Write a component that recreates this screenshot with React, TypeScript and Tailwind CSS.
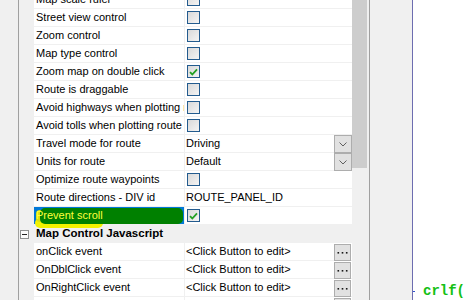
import React from "react";

type Row =
  | { kind: "check"; label: string; checked?: boolean; selected?: boolean }
  | { kind: "drop"; label: string; value: string }
  | { kind: "text"; label: string; value: string }
  | { kind: "btn"; label: string; value: string }
  | { kind: "cat"; label: string };

const rows: Row[] = [
  { kind: "check", label: "Map scale ruler" },
  { kind: "check", label: "Street view control" },
  { kind: "check", label: "Zoom control" },
  { kind: "check", label: "Map type control" },
  { kind: "check", label: "Zoom map on double click", checked: true },
  { kind: "check", label: "Route is draggable" },
  { kind: "check", label: "Avoid highways when plotting route" },
  { kind: "check", label: "Avoid tolls when plotting route" },
  { kind: "drop", label: "Travel mode for route", value: "Driving" },
  { kind: "drop", label: "Units for route", value: "Default" },
  { kind: "check", label: "Optimize route waypoints" },
  { kind: "text", label: "Route directions - DIV id", value: "ROUTE_PANEL_ID" },
  { kind: "check", label: "Prevent scroll", checked: true, selected: true },
  { kind: "cat", label: "Map Control Javascript" },
  { kind: "btn", label: "onClick event", value: "<Click Button to edit>" },
  { kind: "btn", label: "OnDblClick event", value: "<Click Button to edit>" },
  { kind: "btn", label: "OnRightClick event", value: "<Click Button to edit>" },
  { kind: "btn", label: "OnMouseMove event", value: "<Click Button to edit>" },
];

function CheckBox({ checked }: { checked?: boolean }) {
  return (
    <div className="ml-[1px] mt-[2px] flex h-[13px] w-[13px] items-center justify-center border border-[#235b8e] bg-gradient-to-br from-[#d9d9d9] to-[#f4f4f4]">
      {checked && (
        <svg width="9" height="8" viewBox="0 0 9 8">
          <path d="M1 4.2 L3.3 6.5 L8 1.3" fill="none" stroke="#23a023" strokeWidth="1.8" />
        </svg>
      )}
    </div>
  );
}

function DropBtn() {
  return (
    <div className="relative z-10 ml-auto flex h-[18px] w-[18px] shrink-0 items-center justify-center self-start border border-[#adadad] bg-[#e1e1e1]">
      <svg width="8" height="5" viewBox="0 0 8 5">
        <path d="M0.5 0.5 L4 4 L7.5 0.5" fill="none" stroke="#5f5f5f" strokeWidth="1" />
      </svg>
    </div>
  );
}

function DotsBtn() {
  return (
    <div className="relative z-10 ml-auto mr-[1px] mt-[1px] flex h-[17px] w-[17px] shrink-0 items-center justify-center self-start border border-[#adadad] bg-[#e1e1e1]">
      <svg width="11" height="2" viewBox="0 0 11 2">
        <rect x="0.5" y="0" width="1.6" height="1.6" fill="#1a1a1a" />
        <rect x="4.7" y="0" width="1.6" height="1.6" fill="#1a1a1a" />
        <rect x="8.9" y="0" width="1.6" height="1.6" fill="#1a1a1a" />
      </svg>
    </div>
  );
}

function GridRow({ row }: { row: Row }) {
  if (row.kind === "cat") {
    return (
      <div className="flex h-[18px] bg-[#f0f0f0]">
        <div className="flex w-[15px] shrink-0 items-center pl-[1px]">
          <div className="flex h-[9px] w-[9px] items-center justify-center border border-[#8e8f8f] bg-[#fbfbfb]">
            <div className="h-[1px] w-[5px] bg-[#222]" />
          </div>
        </div>
        <div className="pl-[2px] text-[11.5px] font-bold leading-[17px] text-black">{row.label}</div>
      </div>
    );
  }
  const selected = row.kind === "check" && row.selected;
  return (
    <div className="flex h-[18px]">
      <div className="w-[15px] shrink-0 bg-[#f0f0f0]" />
      <div className="flex flex-1 border-b border-[#f0f0f0] bg-white">
        <div
          className={`relative h-[17px] w-[150px] shrink-0 whitespace-nowrap pl-[2px] leading-[17px] ${
            selected ? "bg-[#0078d7] text-[#ffff3c]" : "overflow-hidden text-black"
          }`}
        >
          {selected && (
            <>
              <div className="absolute left-[1px] top-[11px] h-[10px] w-[68px] rounded-full bg-[#f2f200]" />
              <div className="absolute left-[2px] top-[3px] h-[12px] w-[8px] rounded-full bg-[#d8e010]" />
              <div className="absolute left-[6px] top-[1px] h-[16px] w-[143px] rounded-[5px] bg-[#008000]" />
            </>
          )}
          <span className="relative">{row.label}</span>
        </div>
        <div className="flex flex-1 border-l border-[#f0f0f0] pl-[1px]">
          {row.kind === "check" && <CheckBox checked={row.checked} />}
          {row.kind === "drop" && (
            <>
              <span className="leading-[17px]">{row.value}</span>
              <DropBtn />
            </>
          )}
          {row.kind === "text" && <span className="leading-[17px]">{row.value}</span>}
          {row.kind === "btn" && (
            <>
              <span className="leading-[17px]">{row.value}</span>
              <DotsBtn />
            </>
          )}
        </div>
      </div>
    </div>
  );
}

export default function App() {
  return (
    <div
      className="flex h-[300px] w-[464px] overflow-hidden bg-white text-[11px] text-black"
      style={{ fontFamily: '"Liberation Sans", Arial, sans-serif' }}
    >
      <div className="w-[19px] shrink-0 border-r border-[#a0a0a0] bg-[#f0f0f0]" />
      <div className="w-[333px] shrink-0">
        <div className="-mt-[9px] flex flex-col">
          {rows.map((r, i) => (
            <GridRow key={i} row={r} />
          ))}
        </div>
      </div>
      <div className="w-[17px] shrink-0 bg-[#f0f0f0]">
        <div className="h-[168px] w-[15px] bg-[#cdcdcd]" />
      </div>
      <div className="w-[43px] shrink-0 border-l border-[#a0a0a0] bg-[#f0f0f0]" />
      <div className="flex-1 border-l border-[#6d6db0] bg-white">
        <div className="mt-[284px] flex items-center">
          <div className="h-[1px] w-[2px] bg-[#3355cc]" />
          <span
            className="ml-[8px] text-[14px] font-bold leading-[15px] text-[#14c014]"
            style={{ fontFamily: '"Liberation Mono", "Courier New", monospace' }}
          >
            crlf(
          </span>
        </div>
      </div>
    </div>
  );
}
